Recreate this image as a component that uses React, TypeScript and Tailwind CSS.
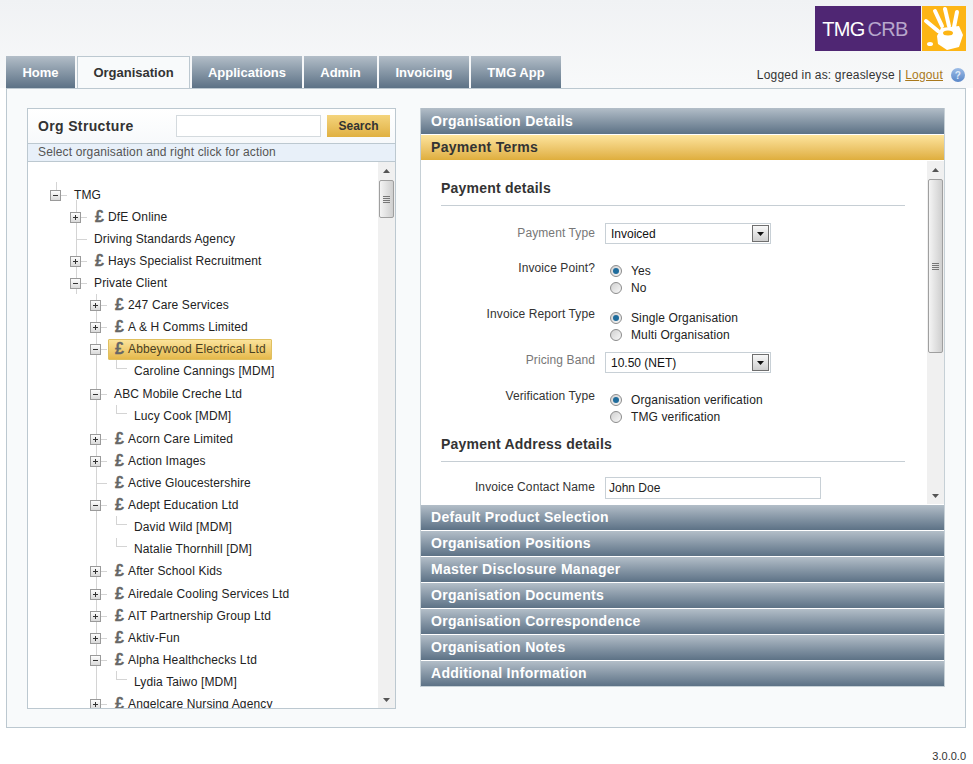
import { ReactNode } from "react"

const tabs = ["Home", "Organisation", "Applications", "Admin", "Invoicing", "TMG App"]
const tabWidths: Record<string, string> = {
    Home: "w-[69px]",
    Organisation: "w-[113px]",
    Applications: "w-[110px]",
    Admin: "w-[73px]",
    Invoicing: "w-[90px]",
    "TMG App": "w-[90px]",
}

type Node = {
    name: string
    level: 0 | 1 | 2 | 3
    box?: "plus" | "minus"
    pound?: boolean
    selected?: boolean
    tall?: boolean
}

const tree: Node[] = [
    { name: "TMG", level: 0, box: "minus" },
    { name: "DfE Online", level: 1, box: "plus", pound: true },
    { name: "Driving Standards Agency", level: 1 },
    { name: "Hays Specialist Recruitment", level: 1, box: "plus", pound: true },
    { name: "Private Client", level: 1, box: "minus" },
    { name: "247 Care Services", level: 2, box: "plus", pound: true },
    { name: "A & H Comms Limited", level: 2, box: "plus", pound: true },
    { name: "Abbeywood Electrical Ltd", level: 2, box: "minus", pound: true, selected: true },
    { name: "Caroline Cannings [MDM]", level: 3, tall: true },
    { name: "ABC Mobile Creche Ltd", level: 2, box: "minus" },
    { name: "Lucy Cook [MDM]", level: 3, tall: true },
    { name: "Acorn Care Limited", level: 2, box: "plus", pound: true },
    { name: "Action Images", level: 2, box: "plus", pound: true },
    { name: "Active Gloucestershire", level: 2, pound: true },
    { name: "Adept Education Ltd", level: 2, box: "minus", pound: true },
    { name: "David Wild [MDM]", level: 3 },
    { name: "Natalie Thornhill [DM]", level: 3 },
    { name: "After School Kids", level: 2, box: "plus", pound: true, tall: true },
    { name: "Airedale Cooling Services Ltd", level: 2, box: "plus", pound: true },
    { name: "AIT Partnership Group Ltd", level: 2, box: "plus", pound: true },
    { name: "Aktiv-Fun", level: 2, box: "plus", pound: true },
    { name: "Alpha Healthchecks Ltd", level: 2, box: "minus", pound: true },
    { name: "Lydia Taiwo [MDM]", level: 3 },
    { name: "Angelcare Nursing Agency", level: 2, box: "plus", pound: true },
]

const closedPanels = [
    "Default Product Selection",
    "Organisation Positions",
    "Master Disclosure Manager",
    "Organisation Documents",
    "Organisation Correspondence",
    "Organisation Notes",
    "Additional Information",
]

const ExpandBox = ({ type }: { type: "plus" | "minus" }) => (
    <svg width="11" height="11" viewBox="0 0 11 11" className="block">
        <defs>
            <linearGradient id="boxFill" x1="0" y1="0" x2="0" y2="1">
                <stop offset="0" stopColor="#ffffff" />
                <stop offset="1" stopColor="#d8d8d8" />
            </linearGradient>
        </defs>
        <rect x="0.5" y="0.5" width="10" height="10" fill="url(#boxFill)" stroke="#9a9a9a" />
        <path d="M3 5.500h5" stroke="#333" />
        {type === "plus" && <path d="M5.500 3v5" stroke="#333" />}
    </svg>
)

const TreeRow = ({ node }: { node: Node }) => {
    const offsets = { 0: "pl-[22px]", 1: "pl-[42px]", 2: "pl-[62px]", 3: "pl-[105px]" }
    return (
        <div className={`relative flex items-center ${node.tall ? "h-[23px] pb-px" : "h-[22px]"} ${offsets[node.level]}`}>
            {/* tree guides */}
            {node.level === 0 && <span className="absolute left-[28px] top-[-2px] h-[8px] w-px bg-[#d4d4d4]" />}
            {node.level === 1 && <span className="absolute left-[48px] top-[-6px] h-[calc(100%+6px)] w-px bg-[#d4d4d4]" />}
            {node.level >= 2 && <span className="absolute left-[68px] top-0 h-full w-px bg-[#d4d4d4]" />}
            {node.level === 3 && (
                <span className="absolute left-[88px] top-0 h-[9px] w-[11px] border-b border-l border-[#d4d4d4]" />
            )}
            {node.level < 3 && (
                <span className="relative flex w-[11px] shrink-0 items-center">
                    {node.box ? (
                        <span className="relative z-10 bg-white"><ExpandBox type={node.box} /></span>
                    ) : (
                        <span className="absolute left-[6px] h-px w-[11px] bg-[#d4d4d4]" />
                    )}
                    {node.box && <span className="absolute left-[11px] h-px w-[6px] bg-[#d4d4d4]" />}
                </span>
            )}
            <span
                className={`flex h-[21px] items-center whitespace-nowrap border pr-[5px] text-[12px] tracking-[0.13px] ${
                    node.level === 3 ? "" : "ml-[7px] pl-[5px]"
                } ${
                    node.selected
                        ? "rounded-[1px] border-[#e0c060] bg-gradient-to-b from-[#fbe39a] to-[#e5b94a] text-[#4a4020]"
                        : "border-transparent text-[#222]"
                }`}
            >
                {node.pound && <span className="mr-[3px] w-[11px] text-center text-[16px] font-bold leading-none text-[#666] [-webkit-text-stroke:0.3px_#666]">£</span>}
                {node.name}
            </span>
        </div>
    )
}

const ScrollArrow = ({ up }: { up?: boolean }) => (
    <div className="flex h-[17px] shrink-0 items-center justify-center">
        <svg width="7" height="4" viewBox="0 0 7 4">
            <path d={up ? "M3.500 0 7 4H0z" : "M0 0h7L3.500 4z"} fill="#555" />
        </svg>
    </div>
)

const Grip = () => (
    <div className="flex flex-col gap-[1px]">
        <span className="h-px w-[7px] bg-[#777]" />
        <span className="h-px w-[7px] bg-[#777]" />
        <span className="h-px w-[7px] bg-[#777]" />
        <span className="h-px w-[7px] bg-[#777]" />
    </div>
)

const Scrollbar = ({ thumbClass }: { thumbClass: string }) => (
    <div className="flex w-[17px] shrink-0 flex-col bg-[#f0f0f0]">
        <ScrollArrow up />
        <div className="flex-1">
            <div className={`mx-auto flex w-[15px] items-center justify-center rounded-[2px] border border-[#9f9f9f] bg-gradient-to-r from-[#f4f4f4] to-[#cfcfcf] ${thumbClass}`}>
                <Grip />
            </div>
        </div>
        <ScrollArrow />
    </div>
)

const AccordionBar = ({ title, active, first }: { title: string; active?: boolean; first?: boolean }) => (
    <div
        className={`flex shrink-0 items-center pl-[10px] text-[14px] font-bold tracking-[0.3px] ${first ? "h-[26px]" : "h-[25px]"} ${
            active
                ? "bg-gradient-to-b from-[#fde49c] to-[#dfae3c] text-[#333]"
                : "bg-gradient-to-b from-[#b3bec8] to-[#5d7286] text-white"
        }`}
    >
        {title}
    </div>
)

const Field = ({ label, muted, top, className, children }: { label: string; muted?: boolean; top: string; className: string; children: ReactNode }) => (
    <div className={`flex ${className}`}>
        <div className={`w-[174px] shrink-0 text-right text-[12px] leading-[14px] tracking-[0.1px] ${top} ${muted ? "text-[#777]" : "text-[#333]"}`}>{label}</div>
        <div className="ml-[10px]">{children}</div>
    </div>
)

const SelectBox = ({ value }: { value: string }) => (
    <div className="flex h-[21px] w-[166px] items-center justify-between border border-[#c8d0d6] bg-white pl-[5px] pr-[1px] text-[12px] text-[#111]">
        {value}
        <span className="flex h-[17px] w-[17px] items-center justify-center border border-[#6f6f6f] bg-gradient-to-b from-[#f8f8f8] to-[#cfcfcf]">
            <svg width="7" height="4" viewBox="0 0 7 4"><path d="M0 0h7L3.500 4z" fill="#111" /></svg>
        </span>
    </div>
)

const Radio = ({ label, checked }: { label: string; checked?: boolean }) => (
    <div className="flex h-[17px] items-center pl-[5px] text-[12px] tracking-[0.12px] text-[#222]">
        <span className="flex h-[12px] w-[12px] items-center justify-center rounded-full border border-[#8c8c8c] bg-gradient-to-br from-[#d0d0d0] to-[#f8f8f8]">
            {checked && <span className="h-[6px] w-[6px] rounded-full bg-[#1f6c9c]" />}
        </span>
        <span className="ml-[9px]">{label}</span>
    </div>
)

const SectionTitle = ({ children, className }: { children: ReactNode; className: string }) => (
    <div className={`ml-[20px] mr-[22px] border-b border-[#c6ced4] text-[14px] font-bold tracking-[0.22px] text-[#333] ${className}`}>{children}</div>
)

const TmgLogo = () => (
    <div className="flex h-[45px] w-[151px]">
        <div className="flex w-[107px] items-center justify-center bg-[#4f2673] pr-[6px] text-[20px] tracking-[-0.7px] text-white">
            TMG<span className="ml-[3px] text-[#b7a6cc]">CRB</span>
        </div>
        <div className="ml-px flex-1 bg-[#fdb515]">
            <svg width="44" height="45" viewBox="0 0 44 45" className="block">
                <g stroke="#fff" strokeLinecap="round" fill="none">
                    <path d="M4 15 16 25" strokeWidth="4" />
                    <path d="M13 5 20 20" strokeWidth="4" />
                    <path d="M23 3 27 20" strokeWidth="4" />
                    <path d="M35 6 32 21" strokeWidth="4" />
                </g>
                <path d="M15 30 19 22 37 20 41 29 37 41 25 44 16 38Z" fill="#fff" />
                <ellipse cx="26" cy="27" rx="5" ry="2.500" fill="#fdb515" />
                <ellipse cx="8" cy="38" rx="3" ry="2" fill="#fff" />
            </svg>
        </div>
    </div>
)

export default function App() {
    return (
        <div className="flex h-[764px] w-[973px] flex-col overflow-hidden bg-white font-['Liberation_Sans',Arial,sans-serif]">
            <div className="bg-gradient-to-b from-[#f0f2f4] to-[#f8f9fa] px-[6px]">
                <div className="flex h-[56px] justify-end pr-[1px] pt-[6px]">
                    <TmgLogo />
                </div>
                <div className="flex h-[32px] items-end justify-between">
                    <div className="flex h-[32px] gap-[2px]">
                        {tabs.map((tab) =>
                            tab === "Organisation" ? (
                                <div key={tab} className={`-mb-px flex h-[33px] items-center justify-center border border-b-0 border-[#bcc8d0] bg-[#f8fafb] text-[13px] font-bold text-[#333] ${tabWidths[tab]}`}>
                                    {tab}
                                </div>
                            ) : (
                                <div key={tab} className={`flex items-center justify-center bg-gradient-to-b from-[#b3bec8] to-[#5d7286] pt-[1px] text-[13px] font-bold text-white ${tabWidths[tab]}`}>
                                    {tab}
                                </div>
                            )
                        )}
                    </div>
                    <div className="flex h-[32px] items-center pr-[2px] pt-[6px] text-[12px] tracking-[0.19px] text-[#333]">
                        <span>Logged in as: greasleyse | <span className="text-[#a9781c] underline">Logout</span></span>
                        <span className="ml-[8px] flex h-[14px] w-[14px] items-center justify-center rounded-full bg-gradient-to-b from-[#9dbce6] to-[#5a87c8] text-[10px] font-bold text-[#dfeaf8]">?</span>
                    </div>
                </div>
            </div>

            <div className="mx-[6px] flex h-[641px] w-[960px] items-start border border-[#bcc8d0] bg-[#f8fafb] pl-[20px] pt-[19px]">
                {/* org tree */}
                <div className="flex h-[601px] w-[369px] shrink-0 flex-col border border-[#bcc8d0] bg-white">
                    <div className="flex h-[34px] shrink-0 items-center justify-between bg-gradient-to-b from-white to-[#f7f9fb] pl-[10px] pr-[5px]">
                        <span className="text-[14px] font-bold tracking-[0.35px] text-[#333]">Org Structure</span>
                        <div className="flex items-center gap-[6px]">
                            <div className="h-[22px] w-[145px] border border-[#d4dade] bg-white" />
                            <div className="flex h-[22px] w-[63px] items-center justify-center bg-gradient-to-b from-[#f4d47c] to-[#e0b040] text-[12px] font-bold text-[#333]">Search</div>
                        </div>
                    </div>
                    <div className="flex h-[19px] shrink-0 items-center border-y border-[#bcc8d0] bg-[#e8f0f9] pb-[1px] pl-[10px] text-[12px] tracking-[0.14px] text-[#555]">
                        Select organisation and right click for action
                    </div>
                    <div className="flex min-h-0 flex-1">
                        <div className="flex-1 overflow-hidden pt-[22px]">
                            {tree.map((node) => <TreeRow key={node.name} node={node} />)}
                        </div>
                        <Scrollbar thumbClass="h-[38px] mt-[1px]" />
                    </div>
                </div>

                {/* accordion */}
                <div className="ml-[24px] flex h-[579px] w-[525px] shrink-0 flex-col gap-px border-x border-b border-[#c6d0d6] bg-white">
                    <AccordionBar title="Organisation Details" first />
                    <AccordionBar title="Payment Terms" active />
                    <div className="flex h-[343px] shrink-0">
                        <div className="flex-1 overflow-hidden">
                            <SectionTitle className="mt-[17px] h-[28px]">Payment details</SectionTitle>
                            <Field label="Payment Type" muted top="mt-[3px]" className="mt-[17px]">
                                <SelectBox value="Invoiced" />
                            </Field>
                            <Field label="Invoice Point?" top="-mt-[1px]" className="mt-[18px]">
                                <Radio label="Yes" checked />
                                <Radio label="No" />
                            </Field>
                            <Field label="Invoice Report Type" top="-mt-[2px]" className="mt-[13px]">
                                <Radio label="Single Organisation" checked />
                                <Radio label="Multi Organisation" />
                            </Field>
                            <Field label="Pricing Band" muted top="mt-[1px]" className="mt-[9px]">
                                <SelectBox value="10.50 (NET)" />
                            </Field>
                            <Field label="Verification Type" top="-mt-[2px]" className="mt-[18px]">
                                <Radio label="Organisation verification" checked />
                                <Radio label="TMG verification" />
                            </Field>
                            <SectionTitle className="mt-[9px] h-[28px]">Payment Address details</SectionTitle>
                            <Field label="Invoice Contact Name" top="mt-[3px]" className="mt-[15px]">
                                <div className="flex h-[22px] w-[216px] items-center border border-[#c8d0d6] pl-[3px] text-[12px] text-[#222]">John Doe</div>
                            </Field>
                        </div>
                        <Scrollbar thumbClass="h-[174px] mt-px" />
                    </div>
                    {closedPanels.map((title) => <AccordionBar key={title} title={title} />)}
                </div>
            </div>

            <div className="pr-[7px] pt-[20px] text-right text-[11px] text-[#333]">3.0.0.0</div>
        </div>
    )
}
